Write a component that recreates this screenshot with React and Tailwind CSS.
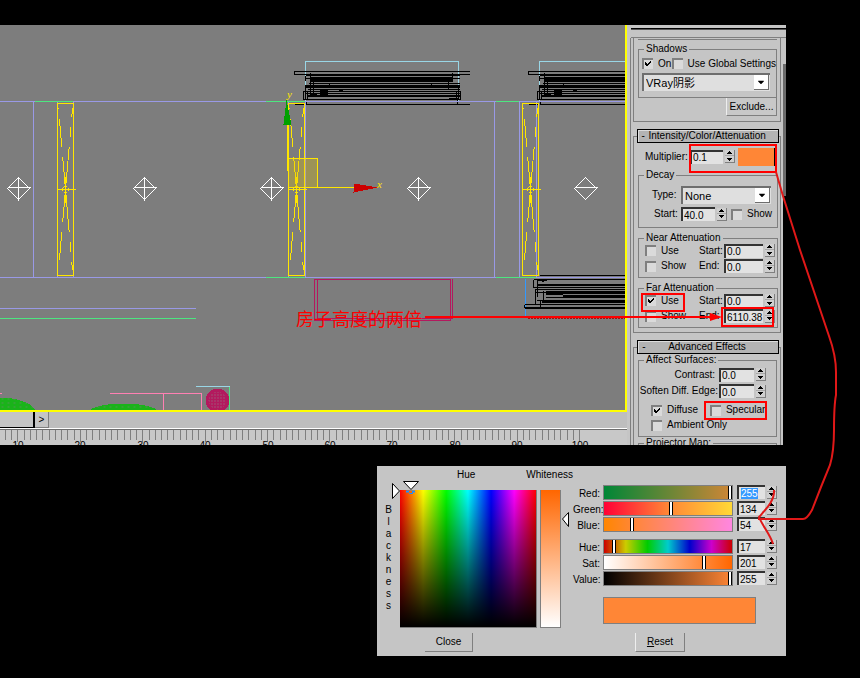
import { FaCaretDown } from 'react-icons/fa';

// one light in the plan: a tall box with dashed diagonals and a target cross
function LightBox({ x }) {
    return (
        <g transform={`translate(${x} 0)`} stroke="#ffe600" fill="none">
            <rect x="0" y="103" width="16" height="172" />
            <path d="M8 189 L1 108 M8 189 L1 270" strokeDasharray="33 10 28 10" />
            <path d="M8 189 L15 108 M8 189 L15 270" strokeDasharray="43 10 10 10 30" />
            <path d="M8 176 V202 M-1 189 H18" />
            <path d="M8 185 L12 189 L8 193 L4 189 Z" strokeDasharray="2 1" />
        </g>
    );
}

function Target({ x, cross = true }) {
    return (
        <g transform={`translate(${x} 188)`} stroke="#ffffff" fill="none">
            <path d="M-11 0 L0 -11 L11 0 L0 11 Z" />
            <path d="M-11 -1 H12" />
            {cross && <path d="M0 -11 V12" />}
        </g>
    );
}

function WindowFrame({ x }) {
    return (
        <g transform={`translate(${x} 0)`} fill="none" stroke="#000000">
            <path d="M0 100 V61 H153 V100" stroke="#99d6e6" />
            <path d="M164 71 H-11 V74 H164" />
            <path d="M0 75 H154 M0 78 H8 M144 78 H154" />
            <rect x="5" y="77" width="142" height="4" fill="#000000" />
            <path d="M3 83 H154" />
            <path d="M0 85 H154 M0 86 H154 M0 87 H154" />
            <path d="M2 89 H154 M0 91 H154 M0 93 H154 M2 95 H154 M2 96 H154 M-1 99 H154" />
            <path d="M-2 91 V99 H2 V91 Z M151 91 V99 H155 V91 Z" />
            <path d="M0 75 V80 M0 84 V99 M5 72 V95 M147 72 V77 M143 80 V88 M153 84 V99 M8 80 V95 M24 82 V86 M126 82 V86" />
            <path d="M14 90 H22 M14 92 H22 M14 94 H22 M33 90 H37 M4 94 H11 M143 98 H152" strokeWidth="2" />
            <path d="M-11 104 H-1 M1 100 V104 M1 104 H164 M152 99 V104" />
        </g>
    );
}

function Plan() {
    return (
        <svg viewBox="0 25 625 385" preserveAspectRatio="xMinYMin slice" className="block h-full w-full" shapeRendering="crispEdges">
            <defs>
                <pattern id="mesh" width="3" height="3" patternUnits="userSpaceOnUse">
                    <rect width="3" height="3" fill="#b3195e" />
                    <rect x="1" y="1" width="1" height="1" fill="#8a8a8a" />
                </pattern>
                <pattern id="leaf" width="6" height="4" patternUnits="userSpaceOnUse">
                    <rect width="6" height="4" fill="#1ab31a" />
                    <rect x="1" y="2" width="2" height="1" fill="#4f984f" />
                </pattern>
            </defs>
            <g transform="translate(.5 .5)" fill="none">
                <WindowFrame x={305} />
                <WindowFrame x={539} />

                {/* walls */}
                <path d="M-1 101 H625 M-1 277 H625 M33 101 V277 M57 101 V277 M73 101 V277 M288 101 V277 M305 101 V277 M494 101 V277 M519 101 V277 M536 101 V277 M-1 308 H195" stroke="#9999e6" />
                <path d="M34 101 H72 M265 101 H304 M495 101 H518 M265 277 H304 M495 277 H535 M-1 318 H195" stroke="#4de680" />

                {/* lower window */}
                <path d="M525 278 V316" stroke="#3399ff" />
                <path d="M539 275 H625 M533 279 H625 M533 279 V287 H625 M537 280 H546 M541 281 H543 M536 284 H625 M536 285 H625 M534 289 H625 M545 291 H625 M545 292 H625 M545 293 H625 M535 292 H545 M545 294 H562 M562 295 H625 M562 296 H625 M545 297 H625 M536 300 H625 M541 301 H625 M541 302 H625 M541 304 H625 M524 307 H625 M524 308 H625 M524 304 H541 M524 304 V307 M535 289 V304 M537 279 V296 M543 290 V300 M540 300 V307" stroke="#000000" />
                <path d="M527 318 H625" stroke="#a01010" strokeDasharray="2 1" />

                <rect x="314" y="279" width="136" height="41" stroke="#b3195e" />
                <path d="M317 278 V318 H452 V278" stroke="#b3195e" />

                {/* furniture at the lower edge */}
                <ellipse cx="-2" cy="412" rx="37" ry="15" fill="url(#leaf)" />
                <ellipse cx="123" cy="413" rx="36" ry="10" fill="url(#leaf)" />
                <path d="M-1 393 H1 M109 393 H201 V410 M163 393 V410" stroke="#ff80b3" />
                <circle cx="217" cy="400" r="12" fill="#b3195e" />
                <circle cx="217" cy="400" r="9" fill="url(#mesh)" />
                <path d="M195 386 H229" stroke="#99d6e6" />
                <path d="M229 386 V410" stroke="#4de680" />

                <LightBox x={57} />
                <LightBox x={288} />
                <LightBox x={522} />

                <Target x={18} />
                <Target x={144} />
                <Target x={271} />
                <Target x={418} />
                <Target x={585} cross={false} />

                {/* move gizmo */}
                <rect x="288" y="158" width="29" height="29" fill="#e6c800" fillOpacity="0.3" stroke="#ffe600" />
                <path d="M287 124 V170 M288 187 H353" stroke="#ffe600" />
                <path d="M286 99 L291 124 H283 Z" fill="#00a000" />
                <path d="M353 183 L377 187 L353 192 Z" fill="#cc0000" />
            </g>
            <text x="287" y="98" fill="#ffe600" className="font-['Liberation_Serif'] text-[11px] italic">y</text>
            <text x="377" y="188" fill="#ffe600" className="font-['Liberation_Serif'] text-[11px] italic">x</text>
        </svg>
    );
}

function Ruler() {
    const ticks = Array.from({ length: 93 }, (_, i) => i);
    const labels = [10, 20, 30, 40, 50, 60, 70, 80, 90, 100];
    return (
        <svg className="block h-[15px] w-full bg-[#c8c8c8]" shapeRendering="crispEdges">
            {ticks.map((i) => (
                <path key={i} d={`M${Math.round(5 + i * 6.24) + 0.5} 0 V${i % 10 === 2 ? 12 : 10}`} stroke="#7f7f7f" />
            ))}
            {labels.map((n, i) => (
                <text key={n} x={Math.round(18 + i * 62.4)} y="19" textAnchor="middle" className="font-['Liberation_Sans'] text-[10px]">{n}</text>
            ))}
        </svg>
    );
}

function Viewport() {
    return (
        <div className="flex min-w-0 flex-1 flex-col">
            <div className="relative h-[387px] overflow-hidden border-r-2 border-b-2 border-[#ffff00] bg-[#7d7d7d]">
                <Plan />
                <p className="absolute top-[281px] left-[296px] font-['Noto_Sans_CJK_SC',sans-serif] text-[18px] leading-[24px] whitespace-nowrap text-[#ff0000]">房子高度的两倍</p>
            </div>
            <div className="flex h-[16px] bg-[#bebebe]">
                <div className="w-[35px] border-r-2 border-b border-black bg-[#c5c5c5]" />
                <button className="w-[14px] border-r border-b border-[#7f7f7f] bg-[#c5c5c5] text-[10px] leading-[14px]">&gt;</button>
            </div>
            <div className="h-[2px] border-t border-b border-t-white border-b-[#6e6e6e]" />
            <Ruler />
        </div>
    );
}

function Spinner() {
    return (
        <span className="flex h-[13px] w-[10px] shrink-0 flex-col border-r border-b border-[#7f7f7f] bg-[#cfcfcf]">
            <button aria-label="Up" className="flex h-[6px] items-center justify-center border-b border-[#a8a8a8]">
                <svg width="5" height="3" shapeRendering="crispEdges"><path d="M2 0h1v1h1v1h1v1H0V2h1V1h1z" /></svg>
            </button>
            <button aria-label="Down" className="flex h-[6px] items-center justify-center">
                <svg width="5" height="3" shapeRendering="crispEdges"><path d="M0 0h5v1H4v1H3v1H2V2H1V1H0z" /></svg>
            </button>
        </span>
    );
}

function NumberField({ label, value, width = 'w-[39px]', selected }) {
    return (
        <span className="flex shrink-0 items-center gap-[2px]">
            <span className={`flex h-[14px] items-center border-t-2 border-l-2 border-t-[#333333] border-l-[#333333] bg-[#e2e2e2] ${width}`}>
                <input
                    aria-label={label}
                    defaultValue={value}
                    className={`h-[11px] text-[10px] leading-[11px] outline-none ${selected ? 'ml-[2px] w-[17px] bg-[#3399ff] text-white' : 'w-full pl-px'}`}
                />
            </span>
            <Spinner />
        </span>
    );
}

function Check({ label, checked }) {
    return (
        <label className="flex shrink-0 items-center gap-[5px] whitespace-nowrap">
            <span className="relative flex size-[11px]">
                <input
                    type="checkbox"
                    defaultChecked={checked}
                    className="peer size-[11px] appearance-none border-t-2 border-l-2 border-[#7f7f7f] bg-[#dadada]"
                />
                <svg viewBox="0 0 11 11" className="pointer-events-none absolute inset-0 hidden size-[11px] peer-checked:block" shapeRendering="crispEdges">
                    <path d="M3 4 L5 7 L9 3 M3 5 L5 8 L9 4" stroke="#000000" fill="none" />
                </svg>
            </span>
            {label}
        </label>
    );
}

function Dropdown({ label, value, className }) {
    return (
        <span className={`relative flex border-t-2 border-l-2 border-[#6e6e6e] bg-[#dfdfdf] ${className}`}>
            <select aria-label={label} className="w-full appearance-none pl-[2px] text-[11px] outline-none">
                <option>{value}</option>
            </select>
            <span className="pointer-events-none absolute top-0 right-[1px] bottom-[1px] flex w-[15px] items-center justify-center border-r border-b border-[#6e6e6e] bg-white">
                <FaCaretDown className="size-[10px]" />
            </span>
        </span>
    );
}

function Group({ title, children, className = '' }) {
    return (
        <fieldset className={`min-w-0 border border-[#7f7f7f] ${className}`}>
            <legend className="ml-[5px] px-[2px] leading-[12px]">{title}</legend>
            {children}
        </fieldset>
    );
}

function Rollout({ title, children, className = '' }) {
    return (
        <section className="mt-[7px]">
            <button className="relative ml-[4px] flex h-[14px] w-[142px] items-center border border-black bg-[#b3b3b3] shadow-[inset_1px_1px_#dddddd]">
                <span className="w-[12px] text-center">-</span>
                <span className="flex-1 text-center">{title}</span>
                <span className="w-[14px]" />
            </button>
            <div className={`-mt-[7px] border border-[#7f7f7f] pt-[7px] ${className}`}>{children}</div>
        </section>
    );
}

function Attenuation({ title, checked, start, end, className }) {
    return (
        <Group title={title} className={className}>
            <div className="-mt-px flex h-[15px] items-center pr-[2px] pl-[6px]">
                <Check label="Use" checked={checked} />
                <span className="flex-1" />
                <span className="w-[25px]">Start:</span>
                <NumberField label={`${title} start`} value={start} />
            </div>
            <div className="flex h-[16px] items-center pr-[2px] pl-[6px]">
                <Check label="Show" />
                <span className="flex-1" />
                <span className="w-[25px]">End:</span>
                <NumberField label={`${title} end`} value={end} />
            </div>
        </Group>
    );
}

function LightPanel() {
    return (
        <aside className="flex h-[420px] w-[159px] shrink-0 flex-col overflow-hidden bg-[#c5c5c5] text-[10px] leading-[12px] text-black">
            <div className="h-[13px] shrink-0 pt-[3px] pl-[4px]">
                <div className="h-[2px] border-t border-b border-t-black border-b-[#555555]" />
                <div className="mt-[7px] h-px bg-[#7f7f7f]" />
            </div>
            <div className="flex min-h-0 flex-1">
                <div className="ml-[3px] w-[153px] border-l border-[#7f7f7f] pr-[2px] pl-[2px]">
                    <section className="h-[84px] border-x border-b border-[#7f7f7f] pt-px pr-[3px] pl-[4px]">
                        <div className="h-px bg-[#7f7f7f]" />
                        <Group title="Shadows" className="mt-[3px] h-[55px]">
                            <div className="mt-[2px] flex h-[13px] items-center pl-[3px]">
                                <Check label="On" checked />
                                <span className="w-[4px]" />
                                <Check label="Use Global Settings" />
                            </div>
                            <Dropdown label="Shadow type" value="VRay阴影" className="mt-[3px] ml-[3px] h-[18px] w-[128px] font-['Liberation_Sans','Noto_Sans_CJK_SC',sans-serif]" />
                        </Group>
                        <button className="ml-auto block h-[18px] w-[51px] border-r border-b border-l border-[#7f7f7f] border-l-[#eeeeee] bg-[#c8c8c8]">Exclude...</button>
                    </section>

                    <Rollout title="Intensity/Color/Attenuation" className="h-[197px] pr-[2px] pl-[4px]">
                        <div className="flex h-[25px] items-center pl-[7px]">
                            <span className="w-[45px]">Multiplier:</span>
                            <NumberField label="Multiplier" value="0.1" width="w-[33px]" />
                            <button aria-label="Light color" className="ml-[3px] h-[18px] w-[37px] border-r border-black bg-[#ff8636]" />
                        </div>
                        <Group title="Decay" className="h-[59px]">
                            <div className="mt-[5px] flex h-[18px] items-center pl-[13px]">
                                <span className="w-[29px]">Type:</span>
                                <Dropdown label="Decay type" value="None" className="h-[18px] w-[90px]" />
                            </div>
                            <div className="mt-[3px] flex h-[14px] items-center pl-[15px]">
                                <span className="w-[27px]">Start:</span>
                                <NumberField label="Decay start" value="40.0" width="w-[34px]" />
                                <span className="w-[4px]" />
                                <Check label="Show" />
                            </div>
                        </Group>
                        <Attenuation title="Near Attenuation" start="0.0" end="0.0" className="mt-[4px] h-[46px]" />
                        <Attenuation title="Far Attenuation" checked start="0.0" end="6110.38" className="mt-[4px] h-[46px]" />
                    </Rollout>

                    <Rollout title="Advanced Effects" className="h-[120px] pr-[3px] pl-[4px]">
                        <Group title="Affect Surfaces:" className="-mt-px h-[83px]">
                            <div className="mt-px flex h-[15px] items-center justify-end gap-[4px] pr-[10px]">
                                <span>Contrast:</span>
                                <NumberField label="Contrast" value="0.0" width="w-[35px]" />
                            </div>
                            <div className="mt-px flex h-[16px] items-center justify-end gap-px pr-[10px] whitespace-nowrap">
                                <span>Soften Diff. Edge:</span>
                                <NumberField label="Soften Diff. Edge" value="0.0" width="w-[35px]" />
                            </div>
                            <div className="mt-[4px] flex h-[14px] items-center pl-[12px]">
                                <Check label="Diffuse" checked />
                                <span className="w-[12px]" />
                                <Check label="Specular" />
                            </div>
                            <div className="mt-px flex h-[14px] items-center pl-[12px]">
                                <Check label="Ambient Only" />
                            </div>
                        </Group>
                        <Group title="Projector Map:" className="h-[40px]" />
                    </Rollout>
                </div>
                <div className="flex flex-1 flex-col bg-black">
                    <div className="h-[26px] bg-[#c5c5c5]" />
                    <div className="h-[132px] bg-[#6b6b6b]" />
                </div>
            </div>
        </aside>
    );
}

const channels = [
    { label: 'Red:', value: 255, track: 'bg-[linear-gradient(to_right,#008636,#d08636)]', selected: true },
    { label: 'Green:', value: 134, track: 'bg-[linear-gradient(to_right,#ff0036,#ff8636,#ffd836)]' },
    { label: 'Blue:', value: 54, track: 'bg-[linear-gradient(to_right,#ff8600,#ff8636_22%,#ff86e0)]' },
    { label: 'Hue:', value: 17, track: 'bg-[linear-gradient(to_right,#cc0000,#cccc00_17%,#00cc00_34%,#00cccc_50%,#0000cc_67%,#cc00cc_84%,#cc0000)]' },
    { label: 'Sat:', value: 201, track: 'bg-[linear-gradient(to_right,#ffffff,#ff6600)]' },
    { label: 'Value:', value: 255, track: 'bg-[linear-gradient(to_right,#000000,#ff8636)]' }
];

function Channel({ channel }) {
    return (
        <div className="flex h-[16px] items-center">
            <label htmlFor={channel.label} className="w-[30px] pt-[3px] pr-[3px] text-right">{channel.label}</label>
            <input
                id={channel.label}
                type="range"
                min="0"
                max="255"
                defaultValue={channel.value}
                className={`h-[15px] w-[130px] appearance-none border border-[#7f7f7f] [&::-webkit-slider-thumb]:h-[13px] [&::-webkit-slider-thumb]:w-[4px] [&::-webkit-slider-thumb]:appearance-none [&::-webkit-slider-thumb]:border-x [&::-webkit-slider-thumb]:border-black [&::-webkit-slider-thumb]:bg-white ${channel.track}`}
            />
            <span className="w-[4px]" />
            <NumberField label={channel.label} value={channel.value} width="w-[28px]" selected={channel.selected} />
        </div>
    );
}

function ColorSelector() {
    return (
        <div role="dialog" aria-label="Color Selector" className="flex h-[190px] w-[409px] bg-[#c5c5c5] text-[10px] leading-[12px] text-black">
            <div className="flex w-[196px] flex-col">
                <div className="flex h-[24px] pt-[3px]">
                    <span className="w-[151px] pl-[80px]">Hue</span>
                    <span>Whiteness</span>
                </div>
                <div className="relative flex h-[138px]">
                    <div className="flex w-[23px] flex-col items-center pt-[14px]">
                        {'Blackness'.split('').map((c, i) => (
                            <span key={i} className="h-[12px]">{c}</span>
                        ))}
                    </div>
                    <div className="w-[137px] border-r border-b border-[#7f7f7f] bg-[linear-gradient(to_bottom,transparent,#000000),linear-gradient(to_right,#ff0000,#ffff00_17%,#00ff00_34%,#00ffff_50%,#0000ff_67%,#ff00ff_84%,#ff0000)]" />
                    <div className="ml-[3px] w-[21px] border border-t-0 border-[#7f7f7f] bg-[linear-gradient(to_bottom,#ff6600,#ffffff)]" />
                    <svg className="absolute -top-[10px] left-[14px] h-[60px] w-[180px]">
                        <path d="M1.5 3.5 L8.5 11 L1.5 18.5 Z M12.5 1.5 H27.5 L20 9.5 Z M177.500 32.500 V46.500 L171.500 39 Z" fill="#ffffff" stroke="#000000" />
                        <path d="M15 11.500 H24 M18 13 H22" stroke="#1f8fff" strokeWidth="2" />
                        <path d="M18 12 H21" stroke="#ff6600" strokeWidth="2" />
                    </svg>
                </div>
                <button className="mt-[5px] ml-[48px] h-[19px] w-[48px] border-r border-b border-[#7f7f7f]">Close</button>
            </div>
            <div className="flex flex-1 flex-col pt-[18px]">
                {channels.slice(0, 3).map((c) => <Channel key={c.label} channel={c} />)}
                <div className="h-[6px]" />
                {channels.slice(3).map((c) => <Channel key={c.label} channel={c} />)}
                <div className="mt-[11px] ml-[30px] h-[27px] w-[153px] border border-[#7f7f7f] bg-[#ff8636]" />
                <button className="mt-[9px] ml-[62px] h-[19px] w-[50px] border-r border-b border-l border-[#7f7f7f] border-l-[#eeeeee]"><u>R</u>eset</button>
            </div>
        </div>
    );
}

// red marker strokes over both windows, hung on the right edge
function Marks() {
    return (
        <svg viewBox="420 0 440 678" className="pointer-events-none absolute top-0 right-0 h-[678px] w-[440px]" fill="none" stroke="#ff0000">
            <g strokeWidth="2" shapeRendering="crispEdges">
                <rect x="690" y="145" width="86" height="27" />
                <rect x="642" y="294" width="42" height="17" />
                <rect x="722" y="308" width="51" height="18" />
                <rect x="705" y="402" width="61" height="17" />
                <path d="M425 317 H712" />
            </g>
            <path d="M710 313 L722 317 L710 321 Z" fill="#ff0000" stroke="none" />
            <path d="M776 172 L783 196 L800 250 L829 336 C834 350 836 360 836 372 L836 395 C835 400 834 410 834 430 C834 445 833 455 830 465 L821 487 L812 510 Q807 519 803 519 L758 519" stroke="#e01818" strokeWidth="2" />
            <path d="M774 490 C775 501 765 510 759 517 C763 527 770 534 773 544" stroke="#e01818" strokeWidth="2" />
        </svg>
    );
}

export default function App() {
    return (
        <div className="relative min-h-screen overflow-hidden bg-black pt-[25px] pr-[74px] pb-[22px] font-['Liberation_Sans',sans-serif] text-[10px]">
            <main className="flex bg-[#c5c5c5]">
                <Viewport />
                <LightPanel />
            </main>
            <div className="mt-[21px] flex justify-end">
                <ColorSelector />
            </div>
            <Marks />
        </div>
    );
}
